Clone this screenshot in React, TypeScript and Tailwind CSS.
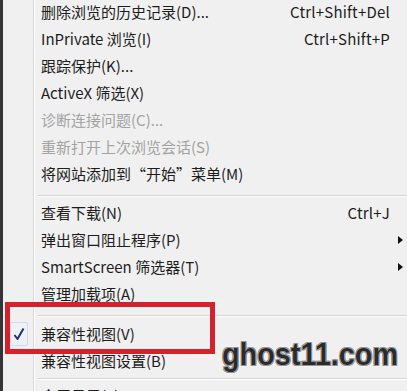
import React from 'react';

type Item =
  | { kind: 'row'; label: string; shortcut?: string; sub?: boolean; disabled?: boolean; checked?: boolean }
  | { kind: 'sep'; h: number; at: number };

const ITEMS: Item[] = [
  { kind: 'row', label: '删除浏览的历史记录(D)...', shortcut: 'Ctrl+Shift+Del' },
  { kind: 'row', label: 'InPrivate 浏览(I)', shortcut: 'Ctrl+Shift+P' },
  { kind: 'row', label: '跟踪保护(K)...' },
  { kind: 'row', label: 'ActiveX 筛选(X)' },
  { kind: 'row', label: '诊断连接问题(C)...', disabled: true },
  { kind: 'row', label: '重新打开上次浏览会话(S)', disabled: true },
  { kind: 'row', label: '将网站添加到“开始”菜单(M)' },
  { kind: 'sep', h: 12, at: 8 },
  { kind: 'row', label: '查看下载(N)', shortcut: 'Ctrl+J' },
  { kind: 'row', label: '弹出窗口阻止程序(P)', sub: true },
  { kind: 'row', label: 'SmartScreen 筛选器(T)', sub: true },
  { kind: 'row', label: '管理加载项(A)' },
  { kind: 'sep', h: 13, at: 8 },
  { kind: 'row', label: '兼容性视图(V)', checked: true },
  { kind: 'row', label: '兼容性视图设置(B)' },
  { kind: 'sep', h: 8, at: 4 },
  { kind: 'row', label: '全屏显示(F)' },
];

function Check() {
  return (
    <div className="w-[18px] h-[24px] flex items-center justify-center bg-[#eef1f8] border border-[#d3d9ea] rounded-[2px]">
      <svg width="12" height="14" viewBox="0 0 12 14">
        <path d="M1.5 8 L4.5 12 L10.5 1.5" fill="none" stroke="#26306e" strokeWidth="2" strokeLinejoin="round" />
      </svg>
    </div>
  );
}

function Row({ item }: { item: Extract<Item, { kind: 'row' }> }) {
  return (
    <div className="flex h-[27px] shrink-0 items-stretch">
      <div className="w-[31px] border-r border-[#d9d9d9] flex items-center justify-end pr-[5px]">
        {item.checked && <Check />}
      </div>
      <div className="flex-1 flex items-center border-l border-white pl-[6px]">
        <span className={`flex-1 text-[15px] leading-none whitespace-nowrap ${item.disabled ? 'text-[#a3a3a3]' : 'text-[#1d1d1d]'}`}>
          {item.label}
        </span>
        {item.shortcut && (
          <span className="text-[15px] leading-none text-[#1d1d1d] whitespace-nowrap tracking-[0.2px]">{item.shortcut}</span>
        )}
        <div className="w-[17px] flex justify-end pr-[4px]">
          {item.sub && (
            <svg width="5" height="8" viewBox="0 0 5 8">
              <path d="M0 0 L5 4 L0 8 Z" fill="#111" />
            </svg>
          )}
        </div>
      </div>
    </div>
  );
}

function Separator({ h, at }: { h: number; at: number }) {
  return (
    <div className="flex shrink-0" style={{ height: h }}>
      <div className="w-[31px] border-r border-[#d9d9d9]" />
      <div className="flex-1 border-l border-white pl-[3px]">
        <div style={{ height: at }} />
        <div className="border-t border-[#d5d5d5] border-b border-b-white" />
      </div>
    </div>
  );
}

export default function App() {
  return (
    <div
      className="relative w-[407px] h-[391px] overflow-hidden bg-[#f0f0f0] flex"
      style={{ fontFamily: '"Noto Sans CJK SC", "Noto Sans", sans-serif' }}
    >
      <div className="w-[3px] bg-[#343434]" />
      <div className="flex-1 flex flex-col mt-[-2px]">
        {ITEMS.map((it, i) =>
          it.kind === 'row' ? <Row key={i} item={it} /> : <Separator key={i} h={it.h} at={it.at} />
        )}
      </div>

      {/* red highlight box */}
      <div className="absolute left-[5px] top-[302px] w-[210px] h-[52px] border-[5px] border-[#d5212b]" />

      {/* watermark */}
      <div
        className="absolute left-[222px] top-[338px] text-[32px] font-bold leading-none text-[#2b2b2b] whitespace-nowrap origin-top-left scale-x-[0.9] [text-shadow:0_0_1px_#fff,1px_1px_0_#8a8a8a,-1px_-1px_0_#8a8a8a,1px_-1px_0_#8a8a8a,-1px_1px_0_#8a8a8a,0_0_4px_#fff]"
        style={{ fontFamily: '"Liberation Sans", sans-serif' }}
      >
        ghost11.com
      </div>
    </div>
  );
}
